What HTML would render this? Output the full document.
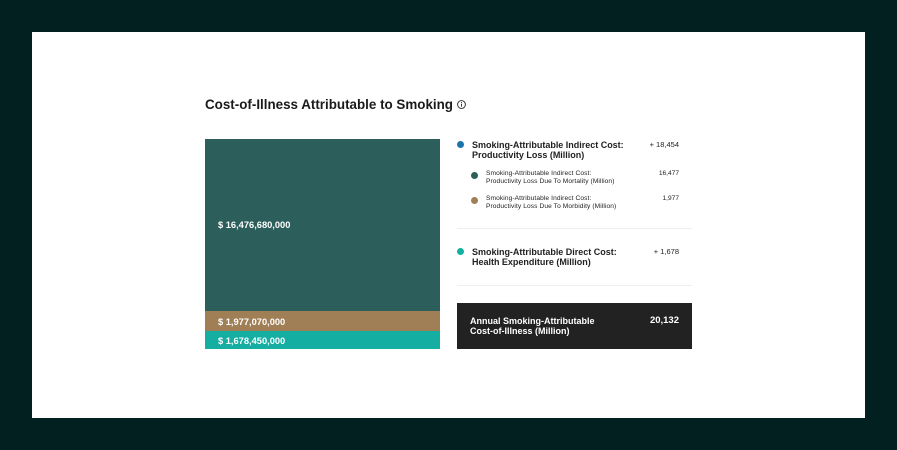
<!DOCTYPE html>
<html>
<head>
<meta charset="utf-8">
<style>
html,body{margin:0;padding:0;}
body{width:897px;height:450px;background:#02201f;overflow:hidden;position:relative;font-family:"Liberation Sans",sans-serif;color:#1a1a1a;}
.a{position:absolute;white-space:nowrap;}
.d{position:absolute;border-radius:50%;}
.b{font-weight:bold;font-size:9px;line-height:10px;letter-spacing:-.01px;color:#222;}
.s{font-size:6.6px;line-height:8px;color:#222;letter-spacing:.1px;}
.v{text-align:right;right:218px;}
.l{font-weight:bold;font-size:9.3px;color:#fff;line-height:12px;}
</style>
</head>
<body>
<div class="a" style="left:32px;top:32px;width:833px;height:386px;background:#fff;"></div>

<div class="a" style="left:205px;top:97px;font-size:13.4px;line-height:16px;font-weight:bold;color:#1a1a1a;">Cost-of-Illness Attributable to Smoking</div>
<svg class="a" style="left:457px;top:100px;" width="9" height="9" viewBox="0 0 9 9"><circle cx="4.5" cy="4.5" r="3.9" fill="none" stroke="#222" stroke-width=".9"/><path d="M4.5 3.8V6.6" stroke="#222" stroke-width=".9"/><circle cx="4.5" cy="2.6" r=".55" fill="#222"/></svg>

<div class="a" style="left:205px;top:139px;width:235px;height:172px;background:#2c5f5b;"></div>
<div class="a" style="left:205px;top:311px;width:235px;height:20px;background:#a07f56;"></div>
<div class="a" style="left:205px;top:331px;width:235px;height:18px;background:#14aea3;"></div>
<div class="a l" style="left:218px;top:219px;">$ 16,476,680,000</div>
<div class="a l" style="left:218px;top:316px;">$ 1,977,070,000</div>
<div class="a l" style="left:218px;top:335px;">$ 1,678,450,000</div>

<div class="d" style="left:457px;top:141px;width:7px;height:7px;background:#1b75a8;"></div>
<div class="a b" style="left:472px;top:140px;">Smoking-Attributable Indirect Cost:<br>Productivity Loss (Million)</div>
<div class="a v" style="top:140px;font-size:7.5px;line-height:9px;color:#222;">+ 18,454</div>

<div class="d" style="left:471px;top:172px;width:7px;height:7px;background:#2c5f5b;"></div>
<div class="a s" style="left:486px;top:170px;">Smoking-Attributable Indirect Cost:<br>Productivity Loss Due To Mortality (Million)</div>
<div class="a v" style="top:170px;font-size:6.6px;line-height:8px;color:#222;">16,477</div>

<div class="d" style="left:471px;top:197px;width:7px;height:7px;background:#a07f56;"></div>
<div class="a s" style="left:486px;top:195px;">Smoking-Attributable Indirect Cost:<br>Productivity Loss Due To Morbidity (Million)</div>
<div class="a v" style="top:195px;font-size:6.6px;line-height:8px;color:#222;">1,977</div>

<div class="a" style="left:457px;top:228px;width:235px;height:1px;background:#eeeeee;"></div>

<div class="d" style="left:457px;top:248px;width:7px;height:7px;background:#14aea3;"></div>
<div class="a b" style="left:472px;top:247px;">Smoking-Attributable Direct Cost:<br>Health Expenditure (Million)</div>
<div class="a v" style="top:247px;font-size:7.5px;line-height:9px;color:#222;">+ 1,678</div>

<div class="a" style="left:457px;top:285px;width:235px;height:1px;background:#eeeeee;"></div>

<div class="a" style="left:457px;top:303px;width:235px;height:46px;background:#222222;"></div>
<div class="a" style="left:470px;top:316px;font-weight:bold;font-size:9px;line-height:10px;color:#fff;">Annual Smoking-Attributable<br>Cost-of-Illness (Million)</div>
<div class="a v" style="top:315px;font-weight:bold;font-size:9.5px;line-height:11px;color:#fff;">20,132</div>
</body>
</html>
